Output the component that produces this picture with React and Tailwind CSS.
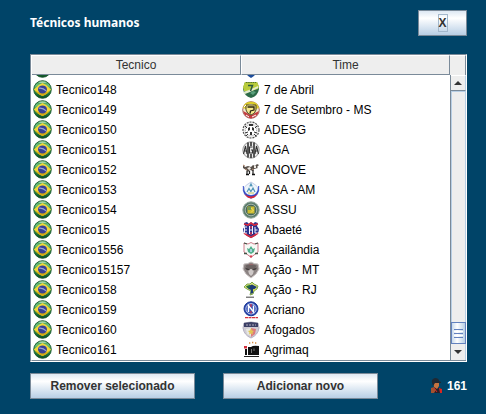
import React from "react";

function BrazilFlag() {
  return (
    <svg viewBox="0 0 19 19" className="size-[19px] shrink-0" aria-hidden="true">
      <defs>
        <linearGradient id="ball" x1="0" y1="0" x2="0" y2="1">
          <stop offset="0" stopColor="#2f8a48" />
          <stop offset="0.25" stopColor="#6cc07c" />
          <stop offset="0.6" stopColor="#2d8a44" />
          <stop offset="1" stopColor="#0c4a22" />
        </linearGradient>
      </defs>
      <circle cx="9.5" cy="9.5" r="8.8" fill="url(#ball)" stroke="#14552b" strokeWidth="0.9" />
      <path d="M5 2.4Q9.5 .2 14 2.4Q9.5 3.6 5 2.4Z" fill="#c9ecc9" opacity="0.7" />
      <path d="M.9 9.5Q5 4.5 9.5 3Q14 4.5 18.1 9.5Q14 14.6 9.5 16.1Q5 14.6 .9 9.5Z" fill="#f2d83a" />
      <path d="M1.6 10.3Q9.5 16 17.4 10.3Q13.5 14.8 9.5 16.1Q5.5 14.8 1.6 10.3Z" fill="#d3a914" />
      <ellipse cx="9.5" cy="9.4" rx="4.5" ry="4" fill="#3a4294" />
      <path d="M5.8 8.2Q10 7.6 13.2 10.8" stroke="#9aa4d4" strokeWidth="1.1" fill="none" />
    </svg>
  );
}

const crests = {
  previous: (
    <>
      <path d="M4 2H14V13Q13 16 9 18Q5 16 4 13Z" fill="#1c4c9c" />
    </>
  ),
  abril: (
    <>
      <path d="M3 1H15L16 4L17 8Q16 15 9 17Q2 15 1 8L2 4Z" fill="#2c6a48" />
      <path d="M3 1H15L17 5L16 8L9 10L2 10L1 6Z" fill="#b9cc3c" />
      <path d="M4 1.5H14" stroke="#52752c" strokeWidth="1.2" strokeDasharray="1.5 .7" />
      <path d="M1 11L7 9L16 5L16 7L8 11L3 13Z" fill="#e4edcf" />
      <path d="M6 4.5H10.5L8.5 10" stroke="#2d5a42" strokeWidth="1.5" fill="none" />
      <path d="M8 12L11 10L14 11L11 14Z" fill="#5aa07c" />
    </>
  ),
  setembro: (
    <>
      <circle cx="9" cy="9" r="8.3" fill="#f4e9ce" stroke="#8a4a42" strokeWidth="0.8" />
      <path d="M1 7Q3 0 9 .7Q15 0 17 7L14 8Q12 3 9 3Q5 3 4 8Z" fill="#dccd2a" />
      <path d="M1 10Q3 17 9 17.4Q15 17 17 10L13 12Q9 16 5 12Z" fill="#c43c40" />
      <path d="M4 4H14V9Q13 13 9 14Q5 13 4 9Z" fill="#f6e98c" stroke="#3c3518" strokeWidth="0.9" />
      <path d="M5.5 6H12V9L8.5 10L8 12.5" stroke="#2a2512" strokeWidth="1.3" fill="none" />
      <path d="M4 14L7 16M10 16L14 14M2 6L4 4" stroke="#fff" />
    </>
  ),
  adesg: (
    <>
      <circle cx="9" cy="9" r="8" fill="#ededed" stroke="#555" strokeWidth="1.2" strokeDasharray="2 1" />
      <circle cx="9" cy="9" r="5.6" fill="#fff" stroke="#999" strokeDasharray="1 1" />
      <path d="M7 3H11V5H7ZM6 7L8 6V9L6 10ZM12 7L10 6V9L12 10ZM8 11H10V14H8Z" fill="#333" />
      <path d="M3 5L5 7M15 5L13 7M3 12L6 11M12 11L15 12M4 15L6 13M14 15L12 13" stroke="#333" />
    </>
  ),
  aga: (
    <>
      <circle cx="9" cy="9" r="8.2" fill="#ededed" stroke="#999" />
      <path d="M6 1.5V16.5M12 1.5V16.5M9 1V5M9 13V17" stroke="#333" strokeWidth="1.6" />
      <path d="M1.5 13L3.5 5L5 13M2 10H5M10.5 6H7.5V12H10.5V9H9M13 13L14.5 5L16.5 13M13 10H16" stroke="#333" strokeWidth="1.1" fill="none" />
    </>
  ),
  anove: (
    <>
      <path d="M1 4L3 6L6 5L9 6L11 4L13 5L15 3L17 4L15 6L16 7L12 8L11 10L8 9L6 11L4 9L1 7Z" fill="#58504a" />
      <path d="M5 7L8 6L9 8L7 9ZM12 5H14V7H12Z" fill="#f1ebe4" />
      <path d="M3 8L5 9M10 8L12 9M1 4L3 5" stroke="#b08a74" />
      <path d="M5 10V13M11 9V13M7.5 10V13" stroke="#222" strokeWidth="1.2" />
      <path d="M4 13.5H7M10 13.5H13" stroke="#111" strokeWidth="1.3" />
    </>
  ),
  asa: (
    <>
      <path d="M9 1Q14 4 15.5 6Q17 14 9 16Q1 14 2.5 6Q4 4 9 1Z" fill="#eef5fb" stroke="#c2cde8" />
      <path d="M1.3 5Q0 15 9 17.3Q18 15 16.7 5Q16.5 14 9 14.6Q1.5 14 1.3 5Z" fill="#2c44c4" stroke="#2c44c4" strokeWidth="0.6" />
      <path d="M2.5 13Q5 17 9 17.5Q13 17 15.5 13Q12 15.6 9 15.6Q6 15.6 2.5 13Z" fill="#e02634" />
      <path d="M5 11L7 7.5L9 11M9 10.5L11 7L13 11M7.8 5.5L9 3L10.2 5.5" stroke="#5296b8" strokeWidth="1.2" fill="none" />
      <path d="M6 12H12" stroke="#c9c65a" />
    </>
  ),
  assu: (
    <>
      <circle cx="9" cy="9" r="8.2" fill="#5c7c6c" stroke="#97aba0" />
      <circle cx="9" cy="9" r="5.8" fill="#47685a" stroke="#b7c7bd" strokeWidth="0.8" />
      <rect x="5.5" y="5.5" width="7" height="7" fill="#cdbd31" />
      <path d="M6 6H9V9H6Z" fill="#6f9a5b" />
      <path d="M9 7L11.5 9L9 11.5" stroke="#f0df65" fill="none" />
    </>
  ),
  abaete: (
    <>
      <path d="M2 2L5 1L7 3L9 1L11 3L13 1L16 2L15 5L17 8Q17 14 9 17Q1 14 1 8L3 5Z" fill="#28328e" />
      <path d="M2 3L6 4L9 2L12 4L16 3M2 12L5 14L9 16.3L13 14L16 12" stroke="#d52b40" strokeWidth="1.7" fill="none" />
      <path d="M5 6H2.5V12H5M2.5 9H5M7.5 5V13M7.5 9H10.5M10.5 5V13M13 6V12H15.5M13 9H15.5" stroke="#f0effa" strokeWidth="1" fill="none" />
      <path d="M9 5V7.5M9 11V14" stroke="#e13247" strokeWidth="1.3" />
    </>
  ),
  acailandia: (
    <>
      <path d="M2 2L6 3L9 1.5L12 3L16 2V11L12 14L9 16.5L6 14L2 11Z" fill="#f6f8f5" stroke="#cf7c8c" />
      <path d="M2 2L5 3M13 3L16 2M2 12.5H5M13 12.5H16" stroke="#445447" strokeWidth="1.3" />
      <path d="M5 7L7 8L9 5L11 8L13 7L12 11L9 13L6 11Z" fill="#4fae8a" />
      <path d="M8 8H10V11H8Z" fill="#a5cfd9" />
      <path d="M7.5 14.5H10.5L9 17Z" fill="#d92d42" />
    </>
  ),
  mt: (
    <>
      <path d="M2 3Q6 3 9 1Q12 3 16 3L17 8L14 13L9 17L4 13L1 8Z" fill="#8b8382" stroke="#c9c2c2" />
      <path d="M3.5 4.5Q9 2.5 14.5 4.5L13 8H5Z" fill="#6b6261" />
      <path d="M6 9L9 8L12 9L11 13L9 15L7 13Z" fill="#cfc9c8" />
      <path d="M3 6.5L8 8.5L7 9.5L4 8.5ZM15 6.5L10 8.5L11 9.5L14 8.5Z" fill="#433d3d" />
      <path d="M7 3.5H11" stroke="#96666a" />
    </>
  ),
  rj: (
    <>
      <path d="M2 6L5 3L8 3L10 1L12 3L16 5L15 8L12 10L11 13L8 14L9 10L5 8Z" fill="#dfe676" stroke="#729c44" strokeWidth="0.9" />
      <path d="M6 5L10 3.5L13 5L15 6L12 8.5L11 12L8.5 13L9 9L6 7.5Z" fill="#1c3a74" />
      <path d="M4 5L8 4L8 6.5L5 7Z" fill="#25703a" />
      <path d="M11 8L13 8.5L11 11Z" fill="#dfe245" />
      <path d="M4 16.2H12" stroke="#555" strokeWidth="1.1" />
    </>
  ),
  acriano: (
    <>
      <circle cx="9" cy="7.8" r="7" fill="#2443ab" stroke="#1a3796" />
      <circle cx="9" cy="7.8" r="5.2" fill="#3853b4" stroke="#d0d8f4" strokeWidth="0.9" />
      <path d="M6.5 11V4.5L11.5 11V4.5" stroke="#fff" strokeWidth="1.4" fill="none" />
      <path d="M9 3V6M9 10V12.5" stroke="#da3445" strokeWidth="1.2" />
      <path d="M3 16.6H16" stroke="#d5323c" strokeWidth="1.1" strokeDasharray="3 .5" />
    </>
  ),
  afogados: (
    <>
      <path d="M2 2L9 1L16 2L17 7Q16 14 9 17Q2 14 1 7Z" fill="#d0ccd4" stroke="#b3b0c2" />
      <path d="M2 2L9 1L16 2L16 6H2Z" fill="#3c4066" />
      <path d="M4 4H14" stroke="#b2adbf" strokeDasharray="2 1" />
      <path d="M9 7L14 8L13 13L9 16Z" fill="#dd7a7c" />
      <path d="M4 8L9 7V15L5 13Z" fill="#e7e8e1" />
      <path d="M9 7L10 9.5L12 10L10.5 11.5L11 13.5L9 12.5L7 13.5L7.5 11.5L6 10L8 9.5Z" fill="#e2c654" />
    </>
  ),
  agrimaq: (
    <>
      <path d="M3 8H5V14H3ZM6 6H9V14H6ZM9 6Q11 4 17 5V14H9Z" fill="#111" />
      <path d="M2 5H5V7.5H2Z" fill="#d12f3c" />
      <path d="M7 2H8.3M10 1.5H11.3M13 2H14.3" stroke="#d58a43" strokeWidth="1.5" />
      <path d="M9.5 8V12M12 7.5V10" stroke="#777" />
      <path d="M2 15.5H17" stroke="#222" />
    </>
  ),
};

function Crest({ name }) {
  return (
    <svg viewBox="0 0 18 18" className="size-[18px] shrink-0" aria-hidden="true">
      {crests[name]}
    </svg>
  );
}

const rows = [
  ["Tecnico148", "7 de Abril", "abril"],
  ["Tecnico149", "7 de Setembro - MS", "setembro"],
  ["Tecnico150", "ADESG", "adesg"],
  ["Tecnico151", "AGA", "aga"],
  ["Tecnico152", "ANOVE", "anove"],
  ["Tecnico153", "ASA - AM", "asa"],
  ["Tecnico154", "ASSU", "assu"],
  ["Tecnico15", "Abaeté", "abaete"],
  ["Tecnico1556", "Açailândia", "acailandia"],
  ["Tecnico15157", "Ação - MT", "mt"],
  ["Tecnico158", "Ação - RJ", "rj"],
  ["Tecnico159", "Acriano", "acriano"],
  ["Tecnico160", "Afogados", "afogados"],
  ["Tecnico161", "Agrimaq", "agrimaq"],
];

function MetalButton({ className, children, ...props }) {
  return (
    <button
      type="button"
      className={`flex h-[26px] items-center justify-center border border-[#7a8a99] bg-linear-to-b from-[#dde8f3] via-white via-30% to-[#b8cfe5] text-xs font-bold text-[#333333] ${className}`}
      {...props}
    >
      {children}
    </button>
  );
}

function CoachTable() {
  return (
    <div className="min-w-0 flex-1">
      <table className="w-full table-fixed border-separate border-spacing-0 text-left text-black">
        <thead>
          <tr className="bg-[#eeeeee] text-[#333333]">
            <th className="h-5 border-t border-r border-b border-t-white border-r-[#7a8a99] border-b-[#7a8a99] p-0 text-center font-normal">Tecnico</th>
            <th className="h-5 border-t border-r border-b border-l border-t-white border-r-[#7a8a99] border-b-[#7a8a99] border-l-white p-0 text-center font-normal">Time</th>
          </tr>
        </thead>
        <tbody>
          <tr aria-hidden="true">
            <td className="p-0">
              <div className="flex h-[5px] items-end overflow-hidden pb-0.5 pl-px"><BrazilFlag /></div>
            </td>
            <td className="p-0">
              <div className="flex h-[5px] items-end overflow-hidden pb-0.5 pl-px"><Crest name="previous" /></div>
            </td>
          </tr>
          {rows.map(([coach, team, crest]) => (
            <tr key={coach}>
              <td className="p-0">
                <div className="flex h-5 items-center gap-1 pb-px pl-px"><BrazilFlag />{coach}</div>
              </td>
              <td className="p-0">
                <div className="flex h-5 items-center gap-1 pb-px pl-px"><Crest name={crest} />{team}</div>
              </td>
            </tr>
          ))}
        </tbody>
      </table>
    </div>
  );
}

function ScrollBar() {
  return (
    <div className="flex w-4 shrink-0 flex-col bg-[#eeeeee]">
      <div className="h-5 shrink-0 border-t border-r border-t-white border-r-[#7a8a99]" />
      <div className="flex flex-1 flex-col border-l border-[#7a8a99]">
        <button type="button" aria-label="Rolar para cima" className="flex h-4 items-center justify-center border-t border-r border-b border-t-white border-r-[#b8cfe5] border-b-[#7a8a99]">
          <svg viewBox="0 0 8 4" className="h-1 w-2"><path d="M0 4L4 0L8 4Z" fill="#333" /></svg>
        </button>
        <div className="flex-1 border-t border-r border-l border-t-[#b8cfe5] border-r-[#b8cfe5] border-l-[#b8cfe5]" />
        <div className="flex h-[22px] flex-col items-center justify-center gap-px border border-[#6382bf] bg-linear-to-r from-[#c8daec] via-white via-40% to-[#b8cfe5]">
          <span className="h-px w-[9px] bg-[#6382bf]" />
          <span className="h-px w-[9px] bg-white" />
          <span className="h-px w-[9px] bg-[#6382bf]" />
          <span className="h-px w-[9px] bg-white" />
          <span className="h-px w-[9px] bg-[#6382bf]" />
        </div>
        <button type="button" aria-label="Rolar para baixo" className="flex h-4 items-center justify-center border-r border-r-[#b8cfe5]">
          <svg viewBox="0 0 8 4" className="h-1 w-2"><path d="M0 0H8L4 4Z" fill="#333" /></svg>
        </button>
      </div>
    </div>
  );
}

function CoachIcon() {
  return (
    <svg viewBox="0 0 13 16" className="h-4 w-[13px]" aria-hidden="true">
      <path d="M1 15Q0 10 4 9L7 10L11 10Q13 12 12 15Z" fill="#26202a" />
      <path d="M3 4H9V8L7 11L4 9Z" fill="#c77440" />
      <path d="M2 5Q1 1 5 0Q9 0 9 3L11 4V5H5L3 8Z" fill="#202832" />
      <path d="M1 10L4 9L6 12L4 15H1Z" fill="#a3512f" />
      <path d="M9 10L12 11V15H10Z" fill="#d92721" />
      <path d="M4 10L7 14" stroke="#d92721" />
    </svg>
  );
}

export default function App() {
  return (
    <main className="flex min-h-screen flex-col bg-[#004468] pt-2.5 pr-[19px] pb-[15px] pl-[30px] font-['Liberation_Sans',Arial,sans-serif] text-xs">
      <header className="flex items-center justify-between">
        <h1 className="font-['Noto_Sans',Tahoma,sans-serif] text-xs font-bold text-white">Técnicos humanos</h1>
        <MetalButton className="w-[49px]" aria-label="Fechar">
          <span className="flex h-[18px] w-2.5 items-center justify-center border border-[#a3b8cc]">X</span>
        </MetalButton>
      </header>

      <section className="mt-[18px] flex border border-t-[#7a8a99] border-r-white border-b-white border-l-[#7a8a99] bg-white">
        <div className="flex min-w-0 flex-1 border-b border-l border-b-[#7a8a99] border-l-white">
          <CoachTable />
          <ScrollBar />
        </div>
      </section>

      <footer className="mt-[11px] flex items-center">
        <MetalButton className="w-[165px]">Remover selecionado</MetalButton>
        <MetalButton className="ml-7 w-[155px]">Adicionar novo</MetalButton>
        <p className="ml-auto flex items-center gap-1 font-bold text-white"><CoachIcon />161</p>
      </footer>
    </main>
  );
}
